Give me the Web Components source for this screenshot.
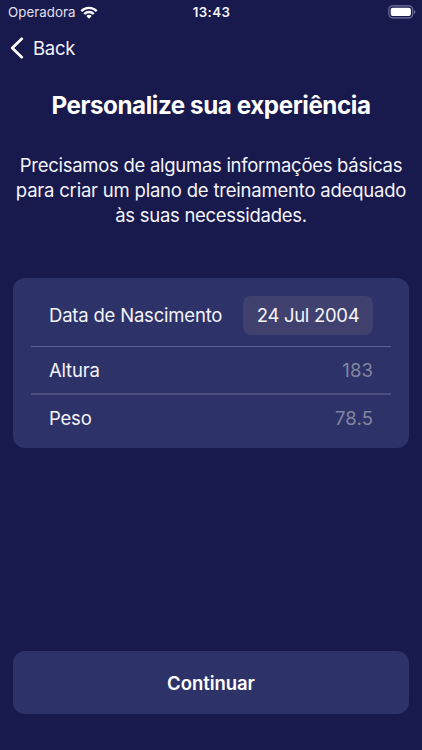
<!DOCTYPE html>
<html lang="pt-BR">
<head>
<meta charset="utf-8">
<meta name="viewport" content="width=device-width, initial-scale=1">
<title>Personalize sua experiência</title>
<style>
  body {
    margin: 0;
    background: #18194c;
    color: #f4f4fb;
    font-family: Inter, 'Liberation Sans', sans-serif;
    font-size: 18.5px;
  }
</style>
</head>
<body>
<setup-screen></setup-screen>

<script>
/**
 * Attaches an open shadow root with the given markup.
 */
const render = (element, html) => {
  const template = document.createElement('template')
  template.innerHTML = html
  element.attachShadow({ mode: 'open' }).appendChild(template.content.cloneNode(true))
}

customElements.define('status-bar',
  /**
   * Represents the status bar with carrier, time and battery.
   */
  class extends HTMLElement {
    constructor () {
      super()
      render(this, `
        <style>
          :host {
            display: grid;
            grid-template-columns: 1fr auto 1fr;
            align-items: center;
            height: 24px;
            padding: 0 6px 0 8px;
            box-sizing: border-box;
            font-size: 13.3px;
            line-height: 24px;
          }
          .carrier {
            display: flex;
            align-items: center;
            gap: 4px;
            color: #e0e0f0;
            letter-spacing: 0.05px;
          }
          .time {
            margin-right: 1px;
            font-weight: 600;
            letter-spacing: 0.4px;
          }
          .battery {
            justify-self: end;
            margin-top: -1px;
          }
          svg {
            display: block;
          }
        </style>
        <div class="carrier">
          <span>Operadora</span>
          <svg width="18" height="13" viewBox="0 0 18 13" fill="none" stroke="#fff" stroke-width="2.3">
            <path d="M1.3 5.1a10.9 10.9 0 0 1 15.4 0"/>
            <path d="M4.2 8a6.8 6.8 0 0 1 9.6 0"/>
            <path d="M9 12.7 6.3 10a3.8 3.8 0 0 1 5.4 0z" fill="#fff" stroke="none"/>
          </svg>
        </div>
        <span class="time">13:43</span>
        <svg class="battery" width="28" height="14" viewBox="0 0 28 14">
          <rect x="0.9" y="0.9" width="23.8" height="12" rx="3.6" fill="none" stroke="#7475a0" stroke-width="1.1"/>
          <rect x="2.7" y="2.7" width="20.2" height="8.4" rx="2" fill="#fff"/>
          <path d="M26 4.9c1.8.6 1.8 3.4 0 4z" fill="#7475a0"/>
        </svg>
      `)
    }
  }
)

customElements.define('back-link',
  /**
   * Represents the navigation bar with its back button.
   */
  class extends HTMLElement {
    constructor () {
      super()
      render(this, `
        <style>
          :host {
            display: flex;
            align-items: center;
            gap: 9px;
            height: 48px;
            padding-left: 10px;
          }
          svg {
            display: block;
          }
          span {
            letter-spacing: -0.3px;
          }
        </style>
        <svg width="14" height="22" viewBox="0 0 14 22" fill="none" stroke="#fff" stroke-width="2.7" stroke-linecap="round" stroke-linejoin="round">
          <path d="M11.8 1.8 2.2 11l9.6 9.2"/>
        </svg>
        <span><slot></slot></span>
      `)
    }
  }
)

customElements.define('form-card',
  /**
   * Represents the rounded card that holds the rows.
   */
  class extends HTMLElement {
    constructor () {
      super()
      render(this, `
        <style>
          :host {
            display: flex;
            flex-direction: column;
            height: 170px;
            padding: 6px 18px 0;
            box-sizing: border-box;
            border-radius: 12px;
            background: #2d3268;
          }
        </style>
        <slot></slot>
      `)
    }
  }
)

customElements.define('form-row',
  /**
   * Represents one labelled row of the card.
   */
  class extends HTMLElement {
    constructor () {
      super()
      render(this, `
        <style>
          :host {
            display: flex;
            align-items: center;
            justify-content: space-between;
            height: 48px;
            padding: 0 18px;
            box-sizing: border-box;
            border-bottom: 2px solid #4b4e7d;
          }
          :host([kind="date"]) {
            height: 63px;
            border-bottom: 1px solid #5f618e;
          }
          :host([last]) {
            height: 45px;
            border-bottom: 0;
          }
          .label {
            letter-spacing: -0.2px;
          }
          .value {
            color: #8385a0;
            letter-spacing: 0.1px;
          }
          :host([kind="date"]) .value {
            width: 130px;
            height: 39px;
            border-radius: 8px;
            background: #40416f;
            color: inherit;
            line-height: 39px;
            letter-spacing: -0.3px;
            text-align: center;
          }
        </style>
        <span class="label"></span>
        <span class="value"><slot></slot></span>
      `)
      this.shadowRoot.querySelector('.label').textContent = this.getAttribute('label')
    }
  }
)

customElements.define('primary-button',
  /**
   * Represents the full width button.
   */
  class extends HTMLElement {
    constructor () {
      super()
      render(this, `
        <style>
          :host {
            display: block;
          }
          button {
            display: block;
            width: 100%;
            height: 63px;
            padding: 0;
            border: 0;
            border-radius: 12px;
            background: #2d3268;
            color: #fff;
            font: inherit;
            font-weight: 600;
            letter-spacing: -0.05px;
          }
        </style>
        <button type="button"><slot></slot></button>
      `)
    }
  }
)

customElements.define('setup-screen',
  /**
   * Represents the whole screen.
   */
  class extends HTMLElement {
    constructor () {
      super()
      render(this, `
        <style>
          :host {
            display: flex;
            flex-direction: column;
            height: 750px;
            overflow: hidden;
          }
          main {
            display: flex;
            flex-direction: column;
            flex: 1;
            padding: 19px 13px 36px;
          }
          h1 {
            margin: 0;
            color: #fff;
            font-size: 24.2px;
            font-weight: 700;
            line-height: 30px;
            letter-spacing: -0.43px;
            text-align: center;
            white-space: nowrap;
          }
          p {
            margin: 32px 0 51px;
            line-height: 24.8px;
            letter-spacing: -0.28px;
            text-align: center;
            white-space: nowrap;
          }
          .wide {
            letter-spacing: -0.21px;
          }
          primary-button {
            margin-top: auto;
          }
        </style>
        <status-bar></status-bar>
        <back-link>Back</back-link>
        <main>
          <h1>Personalize sua experiência</h1>
          <p>Precisamos de algumas informações básicas<br><span class="wide">para criar um plano de treinamento adequado</span><br>às suas necessidades.</p>
          <form-card>
            <form-row kind="date" label="Data de Nascimento">24 Jul 2004</form-row>
            <form-row label="Altura">183</form-row>
            <form-row label="Peso" last>78.5</form-row>
          </form-card>
          <primary-button>Continuar</primary-button>
        </main>
      `)
    }
  }
)
</script>
</body>
</html>
